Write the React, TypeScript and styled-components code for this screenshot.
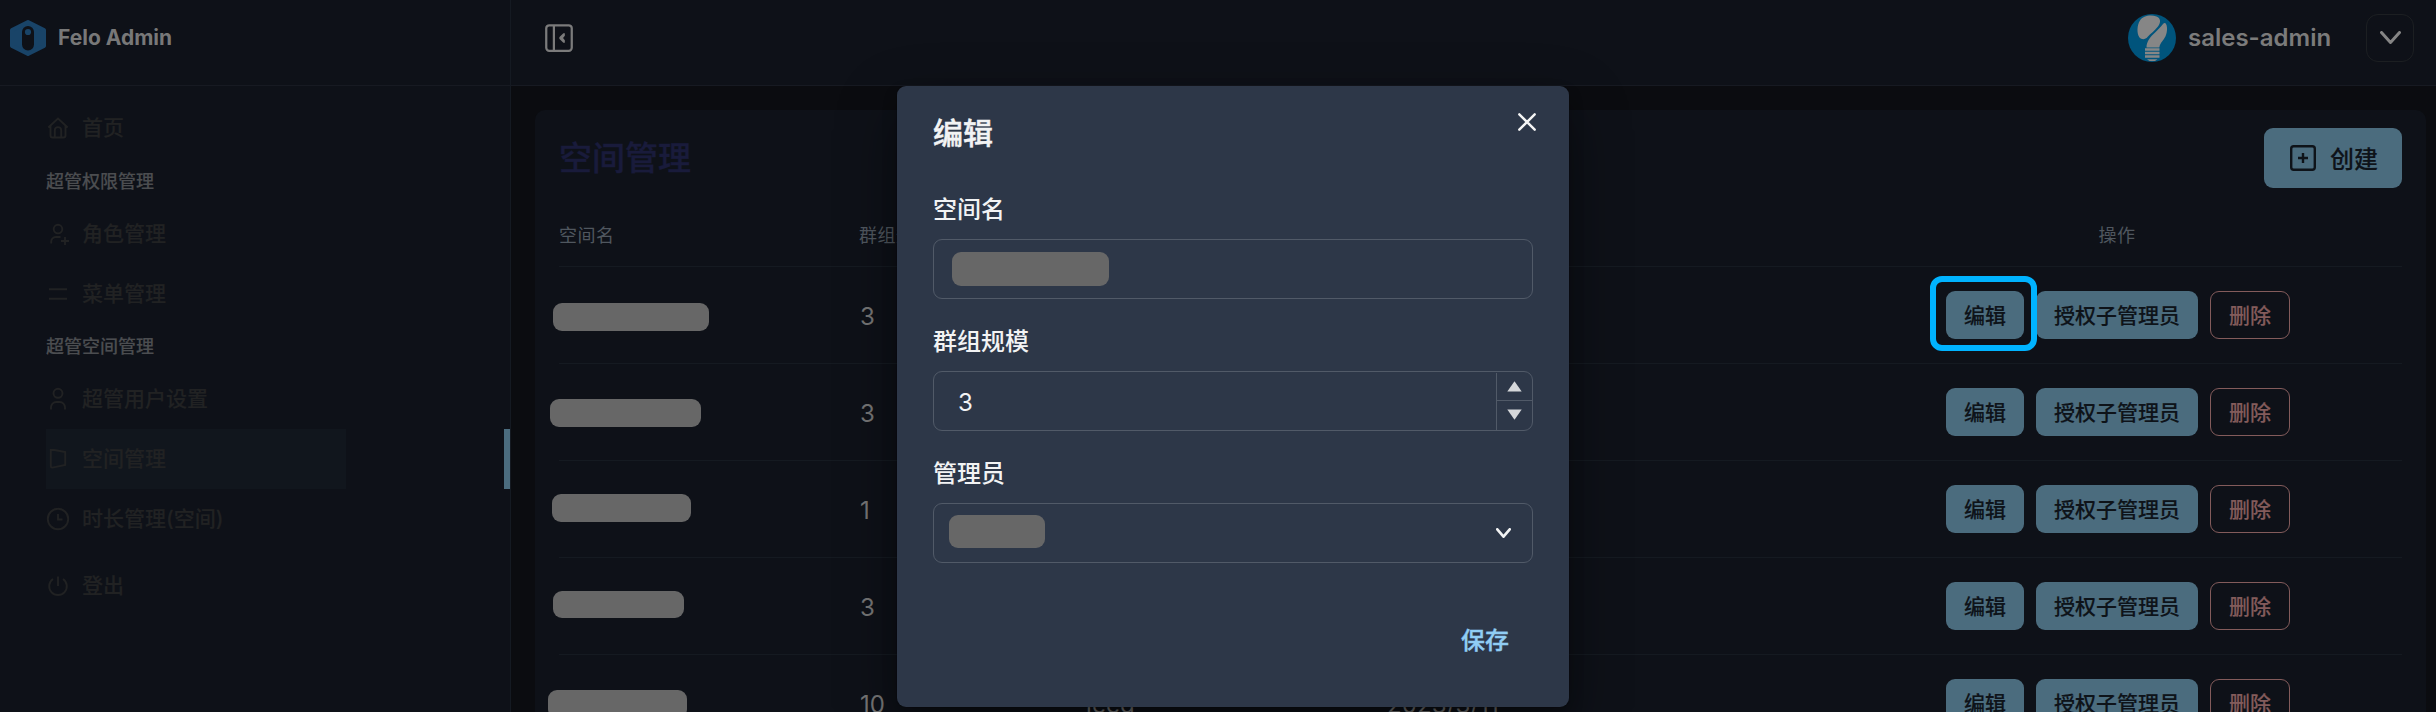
import React from 'react';
import styled, { createGlobalStyle, css } from 'styled-components';

const GlobalStyle = createGlobalStyle`
  *, *::before, *::after { box-sizing: border-box; }
  html, body { margin: 0; padding: 0; background: #0b0c10; }
  body, button, input {
    font-family: Inter, "Noto Sans CJK SC", sans-serif;
    -webkit-font-smoothing: antialiased;
  }
`;

const mediumStroke = css`
  font-weight: 500;
  -webkit-text-stroke: 0.15px currentColor;
`;

const Page = styled.div`
  position: relative;
  display: flex;
  width: 100%;
  height: 712px;
  overflow: hidden;
  background: #0b0c10;
`;

const Sidebar = styled.aside`
  display: flex;
  flex-direction: column;
  flex: none;
  width: 511px;
  background: #0e1118;
  border-right: 1px solid #151a22;
`;

const Brand = styled.div`
  display: flex;
  align-items: center;
  gap: 12px;
  height: 86px;
  padding: 0 0 10px 10px;
  border-bottom: 1px solid #171a22;
`;

const BrandName = styled.span`
  font-size: 21px;
  line-height: 24px;
  font-weight: 700;
  color: #787878;
`;

const Nav = styled.nav`
  display: flex;
  flex-direction: column;
  padding: 12px 0 0 46px;
`;

const GroupLabel = styled.div`
  height: 45.5px;
  padding-top: 1.5px;
  line-height: 44px;
  font-size: 18px;
  ${mediumStroke}
  color: #4b4d50;
`;

const NavItem = styled.a<{ $active?: boolean; $gap?: number }>`
  display: flex;
  justify-content: space-between;
  height: 60px;
  margin-top: ${p => p.$gap ?? 0}px;
  color: #212223;
  border-right: ${p => (p.$active ? '6px solid #4b6c7e' : '0')};
`;

const NavInner = styled.span<{ $active?: boolean }>`
  display: flex;
  align-items: center;
  gap: 12px;
  width: 300px;
  background: ${p => (p.$active ? '#11161d' : 'transparent')};
  font-size: 21px;
  line-height: 30px;
  ${mediumStroke}
`;

const Main = styled.main`
  display: flex;
  flex-direction: column;
  flex: 1;
  min-width: 0;
`;

const TopBar = styled.header`
  display: flex;
  align-items: center;
  justify-content: space-between;
  flex: none;
  height: 86px;
  padding: 0 22px 10px 30px;
  background: #0e1118;
  border-bottom: 1px solid #171a22;
`;

const Account = styled.div`
  display: flex;
  align-items: center;
`;

const AccountName = styled.span`
  margin-left: 12px;
  width: 178px;
  padding-top: 1px;
  font-size: 24px;
  line-height: 30px;
  font-weight: 600;
  color: #7b7b7b;
`;

const MenuButton = styled.button`
  display: flex;
  align-items: center;
  justify-content: center;
  width: 48px;
  height: 48px;
  padding: 0;
  color: #858585;
  background: transparent;
  border: 1px solid #1c1f22;
  border-radius: 12px;
`;

const Panel = styled.section`
  flex: none;
  margin: 24px 10px 0 24px;
  padding: 18px 24px 0;
  height: 640px;
  background: #0e1118;
  border-radius: 10px;
`;

const PanelHead = styled.div`
  display: flex;
  align-items: center;
  justify-content: space-between;
  height: 60px;
`;

const PanelTitle = styled.h1`
  margin: 0;
  font-size: 33px;
  line-height: 40px;
  font-weight: 500;
  -webkit-text-stroke: 0.4px currentColor;
  color: #191b3b;
`;

const CreateButton = styled.button`
  display: flex;
  align-items: center;
  gap: 14px;
  width: 138px;
  height: 60px;
  padding: 0 0 1px 26px;
  font-size: 24px;
  ${mediumStroke}
  color: #0e1319;
  background: #4b6c7e;
  border: 0;
  border-radius: 9px;
`;

const gridColumns = css`
  display: grid;
  grid-template-columns: 300px 226px 301px 1fr 570px;
  align-items: center;
`;

const HeadRow = styled.div`
  ${gridColumns}
  height: 79px;
  padding-top: 17px;
  border-bottom: 1px solid #151a21;
  font-size: 18px;
  line-height: 24px;
  letter-spacing: 0.45px;
  color: #50575f;
`;

const HeadCell = styled.div<{ $center?: boolean }>`
  text-align: ${p => (p.$center ? 'center' : 'left')};
`;

const Row = styled.div`
  ${gridColumns}
  height: 97px;
  border-bottom: 1px solid #151a21;
  font-size: 24px;
  line-height: 36px;
  letter-spacing: 0.1px;
  color: #757575;
`;

const Cell = styled.div`
  min-width: 0;
`;

const TextCell = styled(Cell)`
  padding: 3px 0 0 1px;
`;

const Mask = styled.div<{ $w: number; $h: number; $x?: number; $y?: number }>`
  width: ${p => p.$w}px;
  height: ${p => p.$h}px;
  margin-left: ${p => p.$x ?? 0}px;
  margin-top: ${p => p.$y ?? 0}px;
  background: #676767;
  border-radius: 9px;
`;

const Actions = styled.div`
  display: flex;
  justify-content: center;
  gap: 12px;
  padding-left: 2px;
`;

const ActionButton = styled.button<{ $danger?: boolean; $marked?: boolean }>`
  position: relative;
  height: 48px;
  padding: 0 18px 3px;
  font-size: 21px;
  ${mediumStroke}
  color: ${p => (p.$danger ? '#835b5b' : '#0e1319')};
  background: ${p => (p.$danger ? 'transparent' : '#4b6c7e')};
  border: ${p => (p.$danger ? '1px solid #835b5b' : '0')};
  border-radius: 9px;
  ${p =>
    p.$marked &&
    css`
      z-index: 1;
      &::after {
        content: '';
        position: absolute;
        left: -16px;
        top: -15px;
        width: 107px;
        height: 75px;
        border: 6px solid #00b3ff;
        border-radius: 12px;
      }
    `}
`;

const Modal = styled.div`
  position: absolute;
  left: 897px;
  top: 86px;
  width: 672px;
  height: 621px;
  padding: 24px 36px;
  background: #2d3748;
  border-radius: 9px;
  box-shadow: 0 0 0 1px rgba(0, 0, 0, 0.1), 0 7.5px 15px rgba(0, 0, 0, 0.2), 0 22.5px 60px rgba(0, 0, 0, 0.4);
  color: #f2f3f4;
`;

const ModalHead = styled.div`
  display: flex;
  justify-content: space-between;
  height: 81px;
`;

const ModalTitle = styled.h2`
  margin: 0;
  font-size: 30px;
  line-height: 46px;
  font-weight: 500;
  -webkit-text-stroke: 0.5px currentColor;
`;

const CloseButton = styled.button`
  display: flex;
  align-items: center;
  justify-content: center;
  width: 48px;
  height: 48px;
  margin: -12px -18px 0 0;
  padding: 0;
  color: #f5f5f5;
  background: transparent;
  border: 0;
`;

const Field = styled.div`
  height: 132px;
`;

const Label = styled.div`
  height: 48px;
  padding-top: 1px;
  line-height: 36px;
  font-size: 24px;
  font-weight: 500;
`;

const Control = styled.div`
  display: flex;
  align-items: center;
  height: 60px;
  border: 1px solid #515a68;
  border-radius: 9px;
`;

const Value = styled.span`
  flex: 1;
  padding: 3px 0 0 24px;
  font-size: 24px;
  line-height: 36px;
`;

const Stepper = styled.div`
  display: flex;
  flex-direction: column;
  align-self: stretch;
  width: 36px;
  margin-top: 1px;
  border-left: 1px solid #515a68;
`;

const Step = styled.span`
  display: flex;
  align-items: center;
  justify-content: center;
  flex: 1;
  color: #d5d7da;
  & + & {
    border-top: 1px solid #515a68;
    padding-bottom: 2px;
  }
`;

const SelectArrow = styled.span`
  display: flex;
  margin-left: auto;
  padding-right: 21px;
`;

const SaveButton = styled.button`
  display: block;
  margin: 36px 24px 0 auto;
  padding: 0;
  font-size: 24px;
  line-height: 36px;
  font-weight: 500;
  -webkit-text-stroke: 0.4px currentColor;
  color: #90cdf4;
  background: transparent;
  border: 0;
`;

const LogoIcon = () => (
  <svg width="36" height="36" viewBox="0 0 36 36">
    <path d="M18 2 L34 10 V26 L18 34 L2 26 V10 Z" fill="#194468" stroke="#194468" strokeWidth="4" strokeLinejoin="round" />
    <rect x="12" y="6" width="12" height="24.500" rx="6" fill="#0e1118" />
    <circle cx="18" cy="12" r="3.100" fill="#194468" />
  </svg>
);

const CollapseIcon = () => (
  <svg width="36" height="36" viewBox="0 0 24 24" fill="none" stroke="#7b7b7b">
    <rect x="3.500" y="3.500" width="17" height="17" rx="2" strokeWidth="1.500" />
    <path d="M8.600 3.500v17" strokeWidth="1.500" />
    <path d="M15.900 8.900v1.600L14.700 12l1.200 1.500v1.600h-1L12.500 12.900a1.300 1.300 0 0 1 0-1.800l2.400-2.200Z" fill="#7b7b7b" stroke="none" />
  </svg>
);

type NavIconName = 'home' | 'role' | 'menu' | 'user' | 'space' | 'clock' | 'power';

const navPaths: Record<NavIconName, string> = {
  home: 'M2.3 11.5 12 2.6l9.7 8.9M4.5 9.8v9.7a2 2 0 0 0 2 2h11a2 2 0 0 0 2-2V9.8M8.8 21.3v-7a3.2 3.2 0 0 1 6.4 0v7',
  role: 'M12 2.8a4.3 4.3 0 1 1 0 8.6 4.3 4.3 0 0 1 0-8.6M5.2 21.5v-1.8a4.6 4.6 0 0 1 4.6-4.7h4.7M19 15v8M15 19h8',
  menu: 'M3 7.2h18M3 16.8h18',
  user: 'M12 1.8a4.5 4.5 0 1 1 0 9 4.5 4.5 0 0 1 0-9M5 22.5v-2.2A5.3 5.3 0 0 1 10.3 15h3.4a5.3 5.3 0 0 1 5.3 5.3v2.2',
  space: 'M4.800 3h3.800l10.600 2v13L6.400 20.600q-1.600 0-1.600-1.400Z',
  clock: 'M12 1.8a10.2 10.2 0 1 1 0 20.4 10.2 10.2 0 0 1 0-20.4M12 7v5.5h4.5',
  power: 'M12 2.5v9.5M7 5a8.8 8.8 0 1 0 10 0',
};

const NavIcon = ({ name }: { name: NavIconName }) => (
  <svg width="24" height="24" viewBox="0 0 24 24" fill="none" stroke="currentColor" strokeWidth="1.9">
    <path d={navPaths[name]} />
  </svg>
);

const AvatarIcon = () => (
  <svg width="48" height="48" viewBox="0 0 48 48">
    <defs>
      <clipPath id="avatar-clip">
        <circle cx="24" cy="24" r="24" />
      </clipPath>
    </defs>
    <g clipPath="url(#avatar-clip)">
      <rect width="48" height="48" fill="#00547c" />
      <path d="M11.500 23.500C8.500 19.500 9 11 12 6.500C15 1.500 23 .5 28.500 2.500C33 4.500 33 8.500 30 12.500C26.500 17 22.500 19.500 19.500 23C17.500 25.500 13.800 26 11.500 23.500Z" fill="#868686" />
      <path d="M18.500 33.500C18.500 28 21.500 24 25 20.500C29 16.500 32.500 13.500 35 10C37 8 38.600 9.500 39 13.500C39.300 21 36.500 24.500 33 29C32 30.500 31.500 32 31.300 33.500Z" fill="#868686" />
      <path d="M17 35.500h14.500M17 39h14.500M17 42.500h14.500" stroke="#868686" strokeWidth="2.300" />
      <path d="M19 45.200h10.500l-2.500 1.800h-5.500z" fill="#868686" />
    </g>
  </svg>
);

const ChevronIcon = ({ w, h, stroke }: { w: number; h: number; stroke: number }) => (
  <svg width={w} height={h} viewBox={`0 0 ${w} ${h}`} fill="none" stroke="currentColor" strokeWidth={stroke} strokeLinejoin="round" strokeLinecap="round">
    <path d={`M${stroke / 2} ${stroke / 2}L${w / 2} ${h - stroke / 2}L${w - stroke / 2} ${stroke / 2}`} />
  </svg>
);

const AddIcon = () => (
  <svg width="26" height="26" viewBox="0 0 26 26" fill="none" stroke="currentColor" strokeWidth="2.4">
    <rect x="1.2" y="1.200" width="23.600" height="23.600" rx="2.500" />
    <path d="M13 8v10M8 13h10" />
  </svg>
);

const CloseIcon = () => (
  <svg width="18" height="18" viewBox="0 0 18 18" fill="none" stroke="currentColor" strokeWidth="2.4" strokeLinecap="round">
    <path d="M1.300 1.300l15.400 15.400M16.700 1.300L1.300 16.700" />
  </svg>
);

const Triangle = ({ down }: { down?: boolean }) => (
  <svg width="15" height="11" viewBox="0 0 15 11" fill="currentColor">
    <path d={down ? 'M.3.5h14.4L7.500 10.800z' : 'M.3 10.500h14.400L7.500.2z'} />
  </svg>
);

interface SpaceRow {
  size: string;
  admin: string;
  created: string;
  mask: [number, number, number, number];
}

const rows: SpaceRow[] = [
  { size: '3', admin: '', created: '', mask: [156, 28, -6, 3] },
  { size: '3', admin: '', created: '', mask: [151, 28, -9, 2] },
  { size: '1', admin: '', created: '', mask: [139, 28, -7, -2] },
  { size: '3', admin: '', created: '', mask: [131, 27, -6, -4] },
  { size: '10', admin: 'jeeg', created: '2023/3/11', mask: [139, 28, -11, 2] },
];

const Item = ({ icon, text, active, gap }: { icon: NavIconName; text: string; active?: boolean; gap?: number }) => (
  <NavItem $active={active} $gap={gap}>
    <NavInner $active={active}>
      <NavIcon name={icon} />
      {text}
    </NavInner>
  </NavItem>
);

export default function App() {
  return (
    <>
      <GlobalStyle />
      <Page>
        <Sidebar>
          <Brand>
            <LogoIcon />
            <BrandName>Felo Admin</BrandName>
          </Brand>
          <Nav>
            <Item icon="home" text="首页" />
            <GroupLabel>超管权限管理</GroupLabel>
            <Item icon="role" text="角色管理" />
            <Item icon="menu" text="菜单管理" />
            <GroupLabel>超管空间管理</GroupLabel>
            <Item icon="user" text="超管用户设置" />
            <Item icon="space" text="空间管理" active />
            <Item icon="clock" text="时长管理(空间)" />
            <Item icon="power" text="登出" gap={7} />
          </Nav>
        </Sidebar>
        <Main>
          <TopBar>
            <CollapseIcon />
            <Account>
              <AvatarIcon />
              <AccountName>sales-admin</AccountName>
              <MenuButton>
                <ChevronIcon w={21} h={13} stroke={3} />
              </MenuButton>
            </Account>
          </TopBar>
          <Panel>
            <PanelHead>
              <PanelTitle>空间管理</PanelTitle>
              <CreateButton>
                <AddIcon />
                创建
              </CreateButton>
            </PanelHead>
            <HeadRow>
              <HeadCell>空间名</HeadCell>
              <HeadCell>群组规模</HeadCell>
              <HeadCell />
              <HeadCell />
              <HeadCell $center>操作</HeadCell>
            </HeadRow>
            {rows.map((row, i) => (
              <Row key={i}>
                <Cell>
                  <Mask $w={row.mask[0]} $h={row.mask[1]} $x={row.mask[2]} $y={row.mask[3]} />
                </Cell>
                <TextCell>{row.size}</TextCell>
                <TextCell>{row.admin}</TextCell>
                <TextCell>{row.created}</TextCell>
                <Actions>
                  <ActionButton $marked={i === 0}>编辑</ActionButton>
                  <ActionButton>授权子管理员</ActionButton>
                  <ActionButton $danger>删除</ActionButton>
                </Actions>
              </Row>
            ))}
          </Panel>
        </Main>
        <Modal>
          <ModalHead>
            <ModalTitle>编辑</ModalTitle>
            <CloseButton>
              <CloseIcon />
            </CloseButton>
          </ModalHead>
          <Field>
            <Label>空间名</Label>
            <Control>
              <Mask $w={157} $h={34} $x={18} $y={-1} />
            </Control>
          </Field>
          <Field>
            <Label>群组规模</Label>
            <Control>
              <Value>3</Value>
              <Stepper>
                <Step>
                  <Triangle />
                </Step>
                <Step>
                  <Triangle down />
                </Step>
              </Stepper>
            </Control>
          </Field>
          <Field>
            <Label>管理员</Label>
            <Control>
              <Mask $w={96} $h={33} $x={15} $y={-3} />
              <SelectArrow>
                <ChevronIcon w={15} h={10} stroke={2.600} />
              </SelectArrow>
            </Control>
          </Field>
          <SaveButton>保存</SaveButton>
        </Modal>
      </Page>
    </>
  );
}
